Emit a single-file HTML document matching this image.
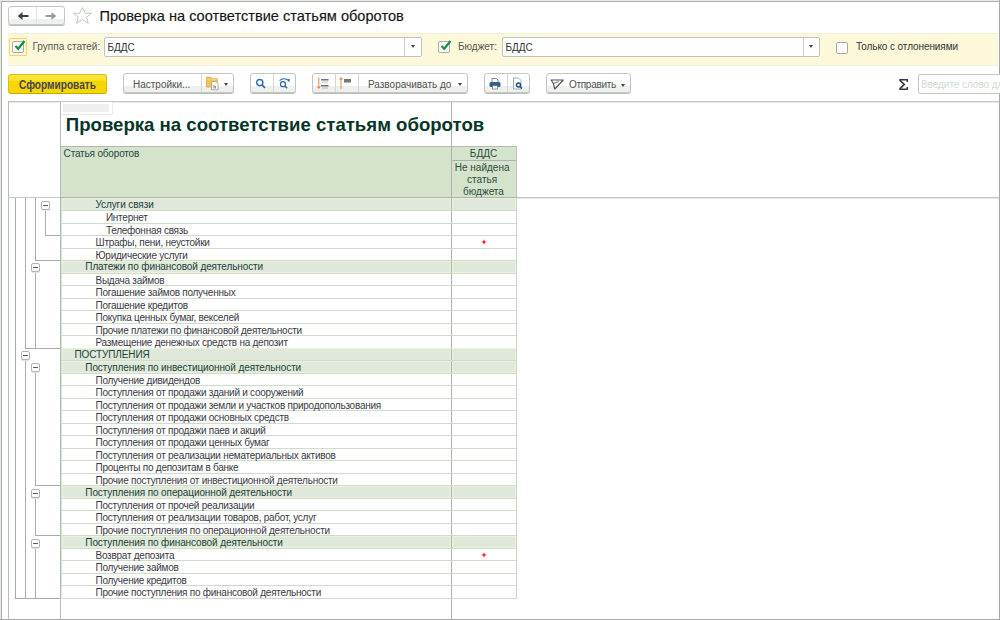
<!DOCTYPE html><html><head><meta charset="utf-8"><style>
*{margin:0;padding:0;box-sizing:border-box}
html,body{width:1000px;height:620px;overflow:hidden;background:#fff}
body{position:relative;font-family:"Liberation Sans",sans-serif}
.a{position:absolute}
.t{position:absolute;white-space:nowrap;line-height:1}
.btn{position:absolute;border:1px solid #c3c7c3;border-radius:3px;background:linear-gradient(#fff 0,#fff 69%,#edf0ed 69%,#edf0ed 100%);box-shadow:0 1px 0 #b9bdb9}
.dv{position:absolute;top:0;bottom:0;width:1px;background:#d3d6d3}
.hl{position:absolute;height:1px}
.vl{position:absolute;width:1px}
.box{position:absolute;width:9px;height:9px;border:1px solid #b0b4b0;border-radius:2px;background:#fff;box-shadow:0 1px 0 #dde6dd}
.box:after{content:"";position:absolute;left:1px;top:3px;width:5px;height:1px;background:#55576a}
.cb{position:absolute;border:1px solid #a8aba8;border-radius:2px;background:#fff}
</style></head><body>
<div class="a" style="left:0;top:0;width:1000px;height:1px;background:#e3ede3"></div>
<div class="a" style="left:0;top:0;width:1px;height:620px;background:#e3ede3"></div>
<div class="a" style="left:1px;top:1px;width:998px;height:1px;background:#adadad"></div>
<div class="a" style="left:1px;top:1px;width:1px;height:619px;background:#adadad"></div>
<div class="a" style="left:999px;top:0;width:1px;height:620px;background:#a9a9a9"></div>
<div class="a" style="left:0;top:619px;width:1000px;height:1px;background:#a9a9a9"></div>
<div class="btn" style="left:8px;top:6px;width:57px;height:18.5px;border-radius:3px"><div class="dv" style="left:27.3px;background:#dfe5df"></div></div>
<svg class="a" style="left:16.5px;top:11px" width="14" height="10" viewBox="0 0 14 10"><path d="M11.5 5H3" stroke="#3c3c3c" stroke-width="2"/><path d="M0.8 5L5.5 1V9Z" fill="#3c3c3c"/></svg>
<svg class="a" style="left:44px;top:11px" width="14" height="10" viewBox="0 0 14 10"><path d="M1.5 5H10" stroke="#9a9a9a" stroke-width="2"/><path d="M12.2 5L7.5 1V9Z" fill="#9a9a9a"/></svg>
<svg class="a" style="left:73px;top:6px" width="20" height="19" viewBox="0 0 20 19"><path d="M9.4 1.6L12.3 7.3H18.4L13.6 11.1L15.2 17.3L9.4 13.6L3.6 17.3L5.2 11.1L0.6 7.3H6.6Z" fill="none" stroke="#b9c9b9" stroke-width="1"/></svg>
<div class="t" style="left:99.5px;top:8.5px;font-size:14.6px;color:#151515;-webkit-text-stroke:0.15px #151515;transform:scaleY(1.04);transform-origin:0 0">Проверка на соответствие статьям оборотов</div>
<div class="a" style="left:8px;top:33px;width:990px;height:33px;background:#fdf8da;border-top:1px solid #eef2db;border-bottom:1px solid #eef2db"></div>
<div class="a" style="left:9px;top:38px;width:18px;height:18px;border:1px solid #f8d45a;border-radius:1px"></div>
<div class="cb" style="left:12px;top:41px;width:12px;height:12px"></div>
<svg class="a" style="left:13px;top:39px" width="13" height="13" viewBox="0 0 13 13"><path d="M2.5 7L5.2 9.8L11.5 2" fill="none" stroke="#16913f" stroke-width="2.2"/></svg>
<div class="t" style="left:32.5px;top:42.1px;font-size:10px;color:#555">Группа статей:</div>
<div class="a" style="left:104px;top:37px;width:318px;height:19.6px;border:1px solid #bfc3bf;border-radius:2px;background:#fff"><div class="dv" style="left:299px;background:#c8cdc8"></div></div>
<div class="t" style="left:107.5px;top:42.6px;font-size:10px;color:#333">БДДС</div>
<div class="a" style="left:410.6px;top:44.8px;width:0;height:0;border-left:2.5px solid transparent;border-right:2.5px solid transparent;border-top:3px solid #444"></div>
<div class="cb" style="left:438px;top:41px;width:12px;height:12px"></div>
<svg class="a" style="left:439px;top:39px" width="13" height="13" viewBox="0 0 13 13"><path d="M2.5 7L5.2 9.8L11.5 2" fill="none" stroke="#16913f" stroke-width="2.2"/></svg>
<div class="t" style="left:458px;top:42.3px;font-size:10px;color:#555">Бюджет:</div>
<div class="a" style="left:502px;top:37px;width:318px;height:19.6px;border:1px solid #bfc3bf;border-radius:2px;background:#fff"><div class="dv" style="left:299.5px;background:#c8cdc8"></div></div>
<div class="t" style="left:505.5px;top:42.6px;font-size:10px;color:#333">БДДС</div>
<div class="a" style="left:808.6px;top:44.8px;width:0;height:0;border-left:2.5px solid transparent;border-right:2.5px solid transparent;border-top:3px solid #444"></div>
<div class="cb" style="left:836px;top:41.5px;width:12px;height:12px"></div>
<div class="t" style="left:856px;top:41.5px;font-size:10px;letter-spacing:-0.08px;color:#333">Только с отлонениями</div>
<div class="a" style="left:8px;top:73.5px;width:99px;height:20px;border:1px solid #dcbc10;border-bottom-color:#c9a800;border-radius:3px;background:linear-gradient(#fbe540 0,#fbe42c 30%,#f6d800 32%,#f5d600 100%)"></div>
<div class="t" style="left:19px;top:80.9px;font-size:10.1px;font-weight:bold;color:#44445a;transform:scaleY(1.2);transform-origin:0 90%">Сформировать</div>
<div class="btn" style="left:122.5px;top:73.3px;width:111px;height:19.6px"><div class="dv" style="left:77.3px"></div></div>
<div class="t" style="left:133px;top:79.8px;font-size:10px;color:#505050">Настройки...</div>
<svg class="a" style="left:205px;top:76px" width="15" height="15" viewBox="0 0 15 15"><path d="M1.5 1.3h4.5l0.8 1.5h5.5v8.2H1.5z" fill="#f3c452" stroke="#dea332" stroke-width="0.8"/><path d="M1.8 3.6h10.6" stroke="#f8d88a" stroke-width="0.8"/><path d="M6.6 5.6h4.4l2 2v6.2h-6.4z" fill="#fff" stroke="#9aa3aa" stroke-width="0.9"/><path d="M8.6 12.5V9.2h0.9v3.3z" fill="#e03838"/><path d="M10 12.5V10h0.9v2.5z" fill="#40b060"/></svg>
<div class="a" style="left:223.7px;top:83px;width:0;height:0;border-left:2.5px solid transparent;border-right:2.5px solid transparent;border-top:3px solid #444"></div>
<div class="btn" style="left:250px;top:73.3px;width:46px;height:19.6px"><div class="dv" style="left:22px"></div></div>
<svg class="a" style="left:255px;top:77px" width="12" height="12" viewBox="0 0 12 12"><circle cx="4.8" cy="5.6" r="3.1" fill="none" stroke="#2d6eb0" stroke-width="1.4"/><path d="M7 7.8L10 10.8" stroke="#2d6eb0" stroke-width="1.7"/></svg>
<svg class="a" style="left:277px;top:76px" width="14" height="14" viewBox="0 0 14 14"><circle cx="6" cy="8.2" r="2.5" fill="none" stroke="#2c69a3" stroke-width="1.3"/><path d="M7.8 10L10.2 12.3" stroke="#2c69a3" stroke-width="1.5"/><path d="M2.6 4.6Q6.3 1.3 10.6 3.9" fill="none" stroke="#2c69a3" stroke-width="1.1"/><path d="M9.6 3.4L12.9 3.1L12.3 6.3Z" fill="#2c69a3"/></svg>
<div class="btn" style="left:311.5px;top:73.3px;width:156px;height:19.6px"><div class="dv" style="left:22.5px"></div><div class="dv" style="left:45.5px"></div></div>
<svg class="a" style="left:315px;top:76px" width="15" height="15" viewBox="0 0 15 15"><path d="M3.8 1.5V11" stroke="#f08040" stroke-width="1"/><path d="M1.8 10.5h4l-2 2.5z" fill="#f08040"/><rect x="6" y="3" width="7.5" height="1.5" fill="#777"/><rect x="7" y="5.5" width="6" height="1" fill="#bbb"/><rect x="6" y="9" width="7.5" height="1.5" fill="#777"/><rect x="7" y="11.5" width="6" height="1" fill="#bbb"/></svg>
<svg class="a" style="left:338px;top:76px" width="15" height="15" viewBox="0 0 15 15"><path d="M3 3V13" stroke="#f08040" stroke-width="1"/><path d="M1 3.5h4l-2-2.5z" fill="#f08040"/><rect x="6" y="3" width="7" height="3.5" fill="#777"/></svg>
<div class="t" style="left:368px;top:79.8px;font-size:10px;color:#505050">Разворачивать до</div>
<div class="a" style="left:458.3px;top:83px;width:0;height:0;border-left:2.5px solid transparent;border-right:2.5px solid transparent;border-top:3px solid #444"></div>
<div class="btn" style="left:483.5px;top:73.3px;width:46px;height:19.6px"><div class="dv" style="left:22.5px"></div></div>
<svg class="a" style="left:488px;top:77px" width="14" height="13" viewBox="0 0 14 13"><path d="M4 1.5h4.5l1.5 1.5v2.5H4z" fill="#fff" stroke="#667" stroke-width="0.8"/><rect x="1.5" y="5" width="11" height="5" rx="1.5" fill="#2f5f8f"/><rect x="4.5" y="8.5" width="5" height="3.5" fill="#fff" stroke="#557" stroke-width="0.6"/></svg>
<svg class="a" style="left:511px;top:77px" width="13" height="13" viewBox="0 0 13 13"><path d="M2.5 1h5l2.5 2.5V12h-7.5z" fill="#fff" stroke="#8a93a0" stroke-width="0.8"/><circle cx="7.5" cy="8" r="2" fill="none" stroke="#1f4f80" stroke-width="1.5"/><path d="M9 9.5l2 2" stroke="#1f4f80" stroke-width="1.5"/></svg>
<div class="btn" style="left:545.5px;top:73.3px;width:85px;height:19.6px"></div>
<svg class="a" style="left:550px;top:78px" width="15" height="12" viewBox="0 0 15 12"><path d="M1.2 2L13.3 2L4.8 11L3.3 5.5Z" fill="none" stroke="#505050" stroke-width="1.1" stroke-linejoin="round"/><path d="M3.3 5.5L9 3.5" stroke="#606060" stroke-width="0.9"/></svg>
<div class="t" style="left:569px;top:79.8px;font-size:10px;letter-spacing:-0.3px;color:#505050">Отправить</div>
<div class="a" style="left:620.5px;top:83.5px;width:0;height:0;border-left:2.5px solid transparent;border-right:2.5px solid transparent;border-top:3px solid #444"></div>
<svg class="a" style="left:898px;top:78px" width="12" height="13" viewBox="0 0 12 13"><path d="M1.3 1.8H9.9M9.3 1.6V3.9M1.3 11.2H9.9M9.3 11.4V9.1" fill="none" stroke="#38383e" stroke-width="1.5"/><path d="M1.8 2.2L6.2 6.5L1.8 10.8" fill="none" stroke="#38383e" stroke-width="1.7"/></svg>
<div class="a" style="left:918px;top:74.3px;width:90px;height:19.7px;border:1px solid #c3c7c3;border-radius:2px;background:#fff"></div>
<div class="t" style="left:921px;top:79.6px;font-size:10px;letter-spacing:-0.05px;color:#d0dcd0">Введите слово для поиска</div>
<div class="hl" style="left:8px;top:101px;width:991px;background:#c4c6c4"></div>
<div class="hl" style="left:9px;top:102px;width:990px;background:#e6eee6"></div>
<div class="vl" style="left:8px;top:101px;height:519px;background:#b8bcb8"></div>
<div class="vl" style="left:60px;top:101px;height:519px;background:#b5bab5"></div>
<div class="vl" style="left:451px;top:102px;height:518px;background:#b0b0b0"></div>
<div class="a" style="left:61px;top:102px;width:52px;height:13px;background:#fff;border-right:1px solid #e9eee9;border-bottom:1px solid #e9eee9"></div>
<div class="a" style="left:63px;top:104px;width:46px;height:8px;background:#edf0ee"></div>
<div class="t" style="left:65.8px;top:116px;font-size:18.6px;font-weight:bold;color:#043628">Проверка на соответствие статьям оборотов</div>
<div class="a" style="left:61px;top:146px;width:456px;height:52px;background:#d5e3cc;border-top:1px solid #b4b8b4;border-right:1px solid #b9c7b9"></div>
<div class="vl" style="left:451px;top:146px;height:52px;background:#b0b0b0"></div>
<div class="hl" style="left:452px;top:160px;width:64px;background:#aab0aa"></div>
<div class="hl" style="left:8px;top:197px;width:991px;background:#c4c6c4"></div>
<div class="hl" style="left:516px;top:198px;width:483px;background:#e3ece3"></div>
<div class="hl" style="left:60px;top:197px;width:457px;background:#adb0ad"></div>
<div class="t" style="left:63.6px;top:148.5px;font-size:10px;letter-spacing:-0.17px;color:#274840">Статья оборотов</div>
<div class="t" style="left:451.5px;top:148.5px;width:64px;text-align:center;font-size:10px;color:#2f4a3c">БДДС</div>
<div class="a" style="left:451.5px;top:162px;width:64px;text-align:center;font-size:10px;line-height:12.2px;color:#2f4a3c;white-space:nowrap">Не найдена&nbsp;<br>статья&nbsp;<br>бюджета</div>
<div class="a" style="left:62px;top:198.1px;width:389px;height:12.51px;background:#e0e8dc;border:1px solid #edf1d6"></div>
<div class="a" style="left:452px;top:198.1px;width:64px;height:12.51px;background:#e0e8dc;border:1px solid #edf1d6"></div>
<div class="hl" style="left:62px;top:210.10999999999999px;width:455px;background:#cddccd"></div>
<div class="t" style="left:95.5px;top:199.9px;font-size:10px;letter-spacing:-0.1px;color:#1c4236">Услуги связи</div>
<div class="hl" style="left:62px;top:222.61999999999998px;width:455px;background:#cddccd"></div>
<div class="t" style="left:105.9px;top:213.10999999999999px;font-size:10px;letter-spacing:-0.25px;color:#3a3a44">Интернет</div>
<div class="hl" style="left:62px;top:235.13px;width:455px;background:#cddccd"></div>
<div class="t" style="left:105.9px;top:225.62px;font-size:10px;letter-spacing:-0.25px;color:#3a3a44">Телефонная связь</div>
<div class="hl" style="left:62px;top:247.64px;width:455px;background:#cddccd"></div>
<div class="t" style="left:95.5px;top:238.13px;font-size:10px;letter-spacing:-0.25px;color:#3a3a44">Штрафы, пени, неустойки</div>
<svg class="a" style="left:480.5px;top:239.43px" width="6" height="6" viewBox="0 0 6 6"><path d="M3 0.3L3.8 2.2L5.8 3L3.8 3.8L3 5.7L2.2 3.8L0.2 3L2.2 2.2Z" fill="#ff1a1a"/></svg>
<div class="hl" style="left:62px;top:260.15px;width:455px;background:#cddccd"></div>
<div class="t" style="left:95.5px;top:250.64px;font-size:10px;letter-spacing:-0.25px;color:#3a3a44">Юридические услуги</div>
<div class="a" style="left:62px;top:260.65px;width:389px;height:12.51px;background:#e0e8dc;border:1px solid #edf1d6"></div>
<div class="a" style="left:452px;top:260.65px;width:64px;height:12.51px;background:#e0e8dc;border:1px solid #edf1d6"></div>
<div class="hl" style="left:62px;top:272.65999999999997px;width:455px;background:#cddccd"></div>
<div class="t" style="left:85.3px;top:262.45px;font-size:10px;letter-spacing:-0.1px;color:#1c4236">Платежи по финансовой деятельности</div>
<div class="hl" style="left:62px;top:285.16999999999996px;width:455px;background:#cddccd"></div>
<div class="t" style="left:95.5px;top:275.65999999999997px;font-size:10px;letter-spacing:-0.25px;color:#3a3a44">Выдача займов</div>
<div class="hl" style="left:62px;top:297.67999999999995px;width:455px;background:#cddccd"></div>
<div class="t" style="left:95.5px;top:288.16999999999996px;font-size:10px;letter-spacing:-0.25px;color:#3a3a44">Погашение займов полученных</div>
<div class="hl" style="left:62px;top:310.19px;width:455px;background:#cddccd"></div>
<div class="t" style="left:95.5px;top:300.68px;font-size:10px;letter-spacing:-0.25px;color:#3a3a44">Погашение кредитов</div>
<div class="hl" style="left:62px;top:322.7px;width:455px;background:#cddccd"></div>
<div class="t" style="left:95.5px;top:313.19px;font-size:10px;letter-spacing:-0.25px;color:#3a3a44">Покупка ценных бумаг, векселей</div>
<div class="hl" style="left:62px;top:335.21px;width:455px;background:#cddccd"></div>
<div class="t" style="left:95.5px;top:325.7px;font-size:10px;letter-spacing:-0.25px;color:#3a3a44">Прочие платежи по финансовой деятельности</div>
<div class="hl" style="left:62px;top:347.71999999999997px;width:455px;background:#cddccd"></div>
<div class="t" style="left:95.5px;top:338.21px;font-size:10px;letter-spacing:-0.25px;color:#3a3a44">Размещение денежных средств на депозит</div>
<div class="a" style="left:62px;top:348.22px;width:389px;height:12.51px;background:#e0e8dc;border:1px solid #edf1d6"></div>
<div class="a" style="left:452px;top:348.22px;width:64px;height:12.51px;background:#e0e8dc;border:1px solid #edf1d6"></div>
<div class="hl" style="left:62px;top:360.23px;width:455px;background:#cddccd"></div>
<div class="t" style="left:74.4px;top:350.02000000000004px;font-size:10px;letter-spacing:-0.1px;color:#1c4236">ПОСТУПЛЕНИЯ</div>
<div class="a" style="left:62px;top:360.73px;width:389px;height:12.51px;background:#e0e8dc;border:1px solid #edf1d6"></div>
<div class="a" style="left:452px;top:360.73px;width:64px;height:12.51px;background:#e0e8dc;border:1px solid #edf1d6"></div>
<div class="hl" style="left:62px;top:372.74px;width:455px;background:#cddccd"></div>
<div class="t" style="left:85.3px;top:362.53000000000003px;font-size:10px;letter-spacing:-0.1px;color:#1c4236">Поступления по инвестиционной деятельности</div>
<div class="hl" style="left:62px;top:385.25px;width:455px;background:#cddccd"></div>
<div class="t" style="left:95.5px;top:375.74px;font-size:10px;letter-spacing:-0.25px;color:#3a3a44">Получение дивидендов</div>
<div class="hl" style="left:62px;top:397.76px;width:455px;background:#cddccd"></div>
<div class="t" style="left:95.5px;top:388.25px;font-size:10px;letter-spacing:-0.25px;color:#3a3a44">Поступления от продажи зданий и сооружений</div>
<div class="hl" style="left:62px;top:410.27px;width:455px;background:#cddccd"></div>
<div class="t" style="left:95.5px;top:400.76px;font-size:10px;letter-spacing:-0.25px;color:#3a3a44">Поступления от продажи земли и участков природопользования</div>
<div class="hl" style="left:62px;top:422.78px;width:455px;background:#cddccd"></div>
<div class="t" style="left:95.5px;top:413.27px;font-size:10px;letter-spacing:-0.25px;color:#3a3a44">Поступления от продажи основных средств</div>
<div class="hl" style="left:62px;top:435.28999999999996px;width:455px;background:#cddccd"></div>
<div class="t" style="left:95.5px;top:425.78px;font-size:10px;letter-spacing:-0.25px;color:#3a3a44">Поступления от продажи паев и акций</div>
<div class="hl" style="left:62px;top:447.79999999999995px;width:455px;background:#cddccd"></div>
<div class="t" style="left:95.5px;top:438.28999999999996px;font-size:10px;letter-spacing:-0.25px;color:#3a3a44">Поступления от продажи ценных бумаг</div>
<div class="hl" style="left:62px;top:460.30999999999995px;width:455px;background:#cddccd"></div>
<div class="t" style="left:95.5px;top:450.79999999999995px;font-size:10px;letter-spacing:-0.25px;color:#3a3a44">Поступления от реализации нематериальных активов</div>
<div class="hl" style="left:62px;top:472.81999999999994px;width:455px;background:#cddccd"></div>
<div class="t" style="left:95.5px;top:463.30999999999995px;font-size:10px;letter-spacing:-0.25px;color:#3a3a44">Проценты по депозитам в банке</div>
<div class="hl" style="left:62px;top:485.3299999999999px;width:455px;background:#cddccd"></div>
<div class="t" style="left:95.5px;top:475.81999999999994px;font-size:10px;letter-spacing:-0.25px;color:#3a3a44">Прочие поступления от инвестиционной деятельности</div>
<div class="a" style="left:62px;top:485.83000000000004px;width:389px;height:12.51px;background:#e0e8dc;border:1px solid #edf1d6"></div>
<div class="a" style="left:452px;top:485.83000000000004px;width:64px;height:12.51px;background:#e0e8dc;border:1px solid #edf1d6"></div>
<div class="hl" style="left:62px;top:497.84000000000003px;width:455px;background:#cddccd"></div>
<div class="t" style="left:85.3px;top:487.63000000000005px;font-size:10px;letter-spacing:-0.1px;color:#1c4236">Поступления по операционной деятельности</div>
<div class="hl" style="left:62px;top:510.35px;width:455px;background:#cddccd"></div>
<div class="t" style="left:95.5px;top:500.84000000000003px;font-size:10px;letter-spacing:-0.25px;color:#3a3a44">Поступления от прочей реализации</div>
<div class="hl" style="left:62px;top:522.86px;width:455px;background:#cddccd"></div>
<div class="t" style="left:95.5px;top:513.35px;font-size:10px;letter-spacing:-0.25px;color:#3a3a44">Поступления от реализации товаров, работ, услуг</div>
<div class="hl" style="left:62px;top:535.37px;width:455px;background:#cddccd"></div>
<div class="t" style="left:95.5px;top:525.86px;font-size:10px;letter-spacing:-0.25px;color:#3a3a44">Прочие поступления по операционной деятельности</div>
<div class="a" style="left:62px;top:535.87px;width:389px;height:12.51px;background:#e0e8dc;border:1px solid #edf1d6"></div>
<div class="a" style="left:452px;top:535.87px;width:64px;height:12.51px;background:#e0e8dc;border:1px solid #edf1d6"></div>
<div class="hl" style="left:62px;top:547.88px;width:455px;background:#cddccd"></div>
<div class="t" style="left:85.3px;top:537.67px;font-size:10px;letter-spacing:-0.1px;color:#1c4236">Поступления по финансовой деятельности</div>
<div class="hl" style="left:62px;top:560.39px;width:455px;background:#cddccd"></div>
<div class="t" style="left:95.5px;top:550.88px;font-size:10px;letter-spacing:-0.25px;color:#3a3a44">Возврат депозита</div>
<svg class="a" style="left:480.5px;top:552.18px" width="6" height="6" viewBox="0 0 6 6"><path d="M3 0.3L3.8 2.2L5.8 3L3.8 3.8L3 5.7L2.2 3.8L0.2 3L2.2 2.2Z" fill="#ff1a1a"/></svg>
<div class="hl" style="left:62px;top:572.9px;width:455px;background:#cddccd"></div>
<div class="t" style="left:95.5px;top:563.39px;font-size:10px;letter-spacing:-0.25px;color:#3a3a44">Получение займов</div>
<div class="hl" style="left:62px;top:585.41px;width:455px;background:#cddccd"></div>
<div class="t" style="left:95.5px;top:575.9px;font-size:10px;letter-spacing:-0.25px;color:#3a3a44">Получение кредитов</div>
<div class="hl" style="left:62px;top:597.92px;width:455px;background:#cddccd"></div>
<div class="t" style="left:95.5px;top:588.41px;font-size:10px;letter-spacing:-0.25px;color:#3a3a44">Прочие поступления по финансовой деятельности</div>
<div class="vl" style="left:516px;top:198px;height:400px;background:#c9d6c9"></div>
<div class="vl" style="left:61px;top:198px;height:400px;background:#d5e2d8"></div>
<div class="vl" style="left:15px;top:198px;height:399.91999999999996px;background:#a9ada9"></div>
<div class="hl" style="left:15px;top:597.92px;width:45px;background:#a9ada9"></div>
<div class="vl" style="left:25px;top:198px;height:149.72000000000003px;background:#a9ada9"></div>
<div class="hl" style="left:25px;top:347.72px;width:35px;background:#a9ada9"></div>
<div class="vl" style="left:25px;top:354.475px;height:243.44499999999994px;background:#a9ada9"></div>
<div class="vl" style="left:35px;top:198px;height:62.14999999999998px;background:#a9ada9"></div>
<div class="hl" style="left:35px;top:260.15px;width:25px;background:#a9ada9"></div>
<div class="vl" style="left:35px;top:266.905px;height:80.81500000000005px;background:#a9ada9"></div>
<div class="vl" style="left:35px;top:366.985px;height:118.34500000000003px;background:#a9ada9"></div>
<div class="hl" style="left:35px;top:485.33000000000004px;width:25px;background:#a9ada9"></div>
<div class="vl" style="left:35px;top:492.08500000000004px;height:43.28499999999997px;background:#a9ada9"></div>
<div class="hl" style="left:35px;top:535.37px;width:25px;background:#a9ada9"></div>
<div class="vl" style="left:35px;top:542.125px;height:55.79499999999996px;background:#a9ada9"></div>
<div class="vl" style="left:45px;top:204.355px;height:30.775000000000006px;background:#a9ada9"></div>
<div class="hl" style="left:45px;top:235.13px;width:15px;background:#a9ada9"></div>
<div class="box" style="left:41px;top:200.855px"></div>
<div class="box" style="left:31px;top:263.405px"></div>
<div class="box" style="left:21px;top:350.975px"></div>
<div class="box" style="left:31px;top:363.485px"></div>
<div class="box" style="left:31px;top:488.58500000000004px"></div>
<div class="box" style="left:31px;top:538.625px"></div>
</body></html>
